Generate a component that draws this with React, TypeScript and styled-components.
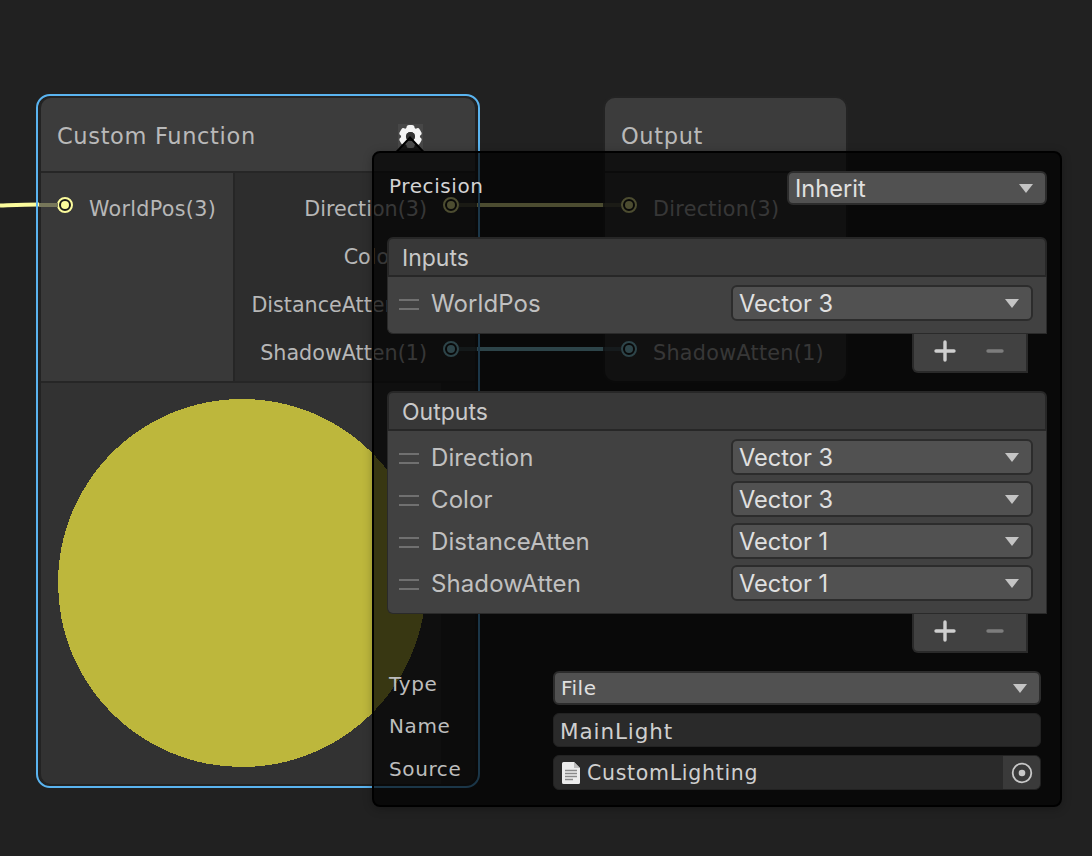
import React from "react";
import styled, { createGlobalStyle } from "styled-components";

const Global = createGlobalStyle`
  html, body { margin: 0; padding: 0; background: #212121; }
`;
const LUCIDA = `"DejaVu Sans", "Noto Sans", sans-serif`;
const INTER = `Inter, "Liberation Sans", sans-serif`;

const Canvas = styled.div`
  position: relative;
  width: 1092px;
  height: 856px;
  overflow: hidden;
  background: #212121;
  font-family: ${LUCIDA};
`;
const Node = styled.div<{ $x: number; $y: number; $w: number }>`
  position: absolute;
  left: ${(p) => p.$x}px;
  top: ${(p) => p.$y}px;
  width: ${(p) => p.$w}px;
  background: #2b2b2b;
  border-radius: 10px;
  overflow: hidden;
  display: flex;
  flex-direction: column;
  box-shadow: 0 0 0 2px #232323;
`;
const Title = styled.div`
  height: 75px;
  flex: none;
  box-sizing: border-box;
  padding: 3px 52px 0 16px;
  display: flex;
  align-items: center;
  justify-content: space-between;
  background: #3c3c3c;
  border-bottom: 2px solid #262626;
  color: #b9b9b9;
  font-size: 22.5px;
  letter-spacing: 0.65px;
`;
const GearBox = styled.div`
  width: 25px;
  height: 25px;
  background: #474747;
  flex: none;
  display: flex;
`;
const Ports = styled.div<{ $last?: boolean }>`
  display: flex;
  height: 208px;
  flex: none;
  overflow: hidden;
  border-bottom: ${(p) => (p.$last ? "0" : "2px solid #262626")};
  box-sizing: content-box;
`;
const InCol = styled.div<{ $full?: boolean }>`
  width: ${(p) => (p.$full ? "100%" : "194px")};
  flex: none;
  background: #393939;
  border-right: ${(p) => (p.$full ? "0" : "2px solid #262626")};
  padding: 24px 0 0 16px;
  box-sizing: border-box;
`;
const OutCol = styled.div`
  flex: 1;
  background: #2d2d2d;
  padding-top: 24px;
  display: flex;
  flex-direction: column;
`;
const PortRow = styled.div<{ $right?: boolean }>`
  height: 48px;
  flex: none;
  display: flex;
  align-items: flex-start;
  justify-content: ${(p) => (p.$right ? "flex-end" : "flex-start")};
  padding-right: ${(p) => (p.$right ? "16px" : "0")};
  gap: 16px;
  color: #b7b7b7;
  font-size: 20.7px;
  line-height: 25px;
`;
const PortLabel = styled.span<{ $wide?: boolean }>`
  white-space: nowrap;
  letter-spacing: ${(p) => (p.$wide ? "0.3px" : "0")};
`;
const Port = styled.span<{ $c: string }>`
  width: 16px;
  height: 16px;
  flex: none;
  box-sizing: border-box;
  border: 2px solid ${(p) => p.$c};
  border-radius: 50%;
  background: #1c1c1c;
  display: flex;
  align-items: center;
  justify-content: center;
  &::after {
    content: "";
    width: 8px;
    height: 8px;
    border-radius: 50%;
    background: ${(p) => p.$c};
  }
`;
const Preview = styled.div`
  width: 400px;
  height: 401px;
  background: #323232;
  display: flex;
  align-items: center;
  justify-content: center;
  padding: 0 0 2px 2px;
  box-sizing: border-box;
`;
const Selection = styled.div`
  position: absolute;
  left: 36px;
  top: 94px;
  width: 444px;
  height: 694px;
  box-sizing: border-box;
  border: 2px solid #5ab4f0;
  border-radius: 14px;
`;
const Wires = styled.svg`
  position: absolute;
  left: 0;
  top: 0;
`;
const Popover = styled.div`
  position: absolute;
  left: 372px;
  top: 151px;
  width: 690px;
  height: 656px;
  box-sizing: border-box;
  padding: 18px 13px 0;
  border: 2px solid #000;
  border-radius: 8px;
  background: rgba(0, 0, 0, 0.7);
  box-shadow: 0 2px 10px rgba(0, 0, 0, 0.25);
  display: flex;
  flex-direction: column;
`;
const Beak = styled.svg`
  position: absolute;
  left: 20px;
  top: -18px;
`;
const FieldRow = styled.div`
  display: flex;
  align-items: center;
  justify-content: space-between;
`;
const FieldLabel = styled.div<{ $bright?: boolean }>`
  margin-left: 2px;
  position: relative;
  top: ${(p) => (p.$bright ? "-2px" : "-4px")};
  font-size: 20px;
  letter-spacing: 0.6px;
  color: ${(p) => (p.$bright ? "#d4d4d4" : "#bdbdbd")};
`;
const Select = styled.div<{ $w: number; $mono?: boolean; $h?: number }>`
  width: ${(p) => p.$w}px;
  height: ${(p) => p.$h ?? 34}px;
  box-sizing: border-box;
  flex: none;
  display: flex;
  align-items: center;
  justify-content: space-between;
  padding: 0 12px 0 6px;
  background: #515151;
  border: 2px solid #2c2c2c;
  border-radius: 6px;
  color: #e0e0e0;
  font-family: ${(p) => (p.$mono ? LUCIDA : INTER)};
  font-size: ${(p) => (p.$mono ? "20px" : "23.6px")};
  letter-spacing: ${(p) => (p.$mono ? "0.5px" : "0")};
`;
const Arrow = styled.span`
  width: 0;
  height: 0;
  border-left: 7.5px solid transparent;
  border-right: 7.5px solid transparent;
  border-top: 9px solid #c4c4c4;
`;
const Section = styled.div<{ $mt: number }>`
  margin-top: ${(p) => p.$mt}px;
  display: flex;
  flex-direction: column;
`;
const SectionHead = styled.div`
  height: 40px;
  box-sizing: border-box;
  padding: 2px 13px 0;
  display: flex;
  align-items: center;
  background: #383838;
  border: 2px solid #272727;
  border-radius: 6px 6px 0 0;
  color: #c9c9c9;
  font-family: ${INTER};
  font-size: 23px;
`;
const List = styled.div`
  box-sizing: border-box;
  padding: 5px 0 9px;
  background: #414141;
  border: 1px solid #2a2a2a;
  border-top: 0;
  border-radius: 0 0 0 6px;
  display: flex;
  flex-direction: column;
`;
const ListRow = styled.div`
  height: 42px;
  display: flex;
  align-items: center;
  padding: 0 13px 0 11px;
  color: #c0c0c0;
  font-family: ${INTER};
  font-size: 24px;
  letter-spacing: 0.1px;
`;
const Handle = styled.span`
  width: 20px;
  height: 7px;
  flex: none;
  margin: 2px 12px 0 0;
  border-top: 2px solid #707070;
  border-bottom: 2px solid #707070;
`;
const RowName = styled.span`
  flex: 1;
`;
const Footer = styled.div`
  align-self: flex-end;
  margin-right: 19px;
  width: 116px;
  height: 39px;
  box-sizing: border-box;
  display: flex;
  align-items: center;
  background: #414141;
  border: 2px solid #2a2a2a;
  border-top: 0;
  border-radius: 0 0 0 6px;
  padding: 0 0 4px 20px;
  gap: 28px;
`;
const Fields = styled.div`
  margin-top: 18px;
  display: flex;
  flex-direction: column;
  gap: 8px;
  padding-right: 6px;
`;
const TextInput = styled.div`
  width: 488px;
  height: 34px;
  box-sizing: border-box;
  display: flex;
  align-items: center;
  padding: 3px 0 0 6px;
  background: #2a2a2a;
  border: 1px solid #222;
  border-radius: 6px;
  color: #cfcfcf;
  font-size: 21.5px;
  letter-spacing: 0.9px;
`;
const ObjectField = styled.div`
  width: 488px;
  height: 35px;
  box-sizing: border-box;
  display: flex;
  align-items: center;
  padding-left: 8px;
  gap: 7px;
  background: #2a2a2a;
  border: 1px solid #222;
  border-radius: 6px;
  overflow: hidden;
  color: #cfcfcf;
  font-size: 20.5px;
  letter-spacing: 0.7px;
`;
const ObjectName = styled.span`
  flex: 1;
`;
const Picker = styled.span`
  width: 37px;
  height: 100%;
  background: #3a3a3a;
  flex: none;
  display: flex;
  align-items: center;
  justify-content: center;
`;

const Gear = () => (
  <svg width="25" height="25" viewBox="0 0 25 25">
    {[0, 60, 120, 180, 240, 300].map((a) => (
      <rect key={a} x="8.500" y="1" width="8" height="6" rx="2.500" fill="#f4f4f4" transform={`rotate(${a} 12.5 12.5)`} />
    ))}
    <circle cx="12.500" cy="12.500" r="7" fill="none" stroke="#f4f4f4" strokeWidth="5" />
    <circle cx="12.500" cy="12.500" r="4.500" fill="#333" />
  </svg>
);
const Plus = () => (
  <svg width="22" height="22" viewBox="0 0 22 22">
    <path d="M11 2v18M2 11h18" stroke="#cfcfcf" strokeWidth="3.400" strokeLinecap="round" />
  </svg>
);
const Minus = () => (
  <svg width="22" height="22" viewBox="0 0 22 22">
    <path d="M4 11h14" stroke="#7d7d7d" strokeWidth="3.400" strokeLinecap="round" />
  </svg>
);
const Doc = () => (
  <svg width="18" height="22" viewBox="0 0 18 22">
    <path d="M1.500 0h10.500l6 6v14.500a1.500 1.500 0 0 1-1.500 1.500h-15A1.500 1.500 0 0 1 0 20.500V1.500A1.500 1.500 0 0 1 1.500 0z" fill="#ececec" />
    <path d="M12 0v6h6z" fill="#bdbdbd" />
    <path d="M3 8.500h12M3 11.500h12M3 14.500h12M3 17.500h8" stroke="#8a8a8a" strokeWidth="1.300" />
  </svg>
);
const Target = () => (
  <svg width="22" height="22" viewBox="0 0 22 22">
    <circle cx="11" cy="11" r="9.300" fill="none" stroke="#c8c8c8" strokeWidth="1.800" />
    <circle cx="11" cy="11" r="3.300" fill="#c8c8c8" />
  </svg>
);
const PreviewDisc = () => (
  <svg width="368" height="368" viewBox="0 0 184 184" shapeRendering="crispEdges">
    <circle cx="92" cy="92" r="92" fill="#bdb73c" />
  </svg>
);

const Row = ({ name, type }: { name: string; type: string }) => (
  <ListRow>
    <Handle />
    <RowName>{name}</RowName>
    <Select $w={302} $h={36}>
      {type}
      <Arrow />
    </Select>
  </ListRow>
);
const ListFooter = () => (
  <Footer>
    <Plus />
    <Minus />
  </Footer>
);

const YELLOW = "#fbfb9c";
const OLIVE = "#fdfda0";
const TEAL = "#98e4f4";

export default function App() {
  return (
    <Canvas>
      <Global />
      <Node $x={41} $y={98} $w={434}>
        <Title>
          Custom Function
          <GearBox>
            <Gear />
          </GearBox>
        </Title>
        <Ports>
          <InCol>
            <PortRow>
              <Port $c={YELLOW} />
              <PortLabel $wide>WorldPos(3)</PortLabel>
            </PortRow>
          </InCol>
          <OutCol>
            <PortRow $right>
              <PortLabel>Direction(3)</PortLabel>
              <Port $c={OLIVE} />
            </PortRow>
            <PortRow $right>
              <PortLabel>Color(3)</PortLabel>
              <Port $c={OLIVE} />
            </PortRow>
            <PortRow $right>
              <PortLabel>DistanceAtten(1)</PortLabel>
              <Port $c={TEAL} />
            </PortRow>
            <PortRow $right>
              <PortLabel>ShadowAtten(1)</PortLabel>
              <Port $c={TEAL} />
            </PortRow>
          </OutCol>
        </Ports>
        <Preview>
          <PreviewDisc />
        </Preview>
      </Node>
      <Node $x={605} $y={98} $w={241}>
        <Title>Output</Title>
        <Ports $last>
          <InCol $full>
            <PortRow>
              <Port $c={OLIVE} />
              <PortLabel $wide>Direction(3)</PortLabel>
            </PortRow>
            <PortRow />
            <PortRow />
            <PortRow>
              <Port $c={TEAL} />
              <PortLabel $wide>ShadowAtten(1)</PortLabel>
            </PortRow>
          </InCol>
        </Ports>
      </Node>
      <Wires width="1092" height="856" viewBox="0 0 1092 856">
        <path d="M0 205.500C14 205 24 204.500 39 204.500" stroke="#fbfb9c" strokeWidth="4" fill="none" />
        <path d="M39 205h19" stroke="#77775a" strokeWidth="4" />
        <path d="M459 205h18M603 205h18" stroke="#8a8a60" strokeWidth="4" opacity="0.45" />
        <path d="M477 205h126" stroke={OLIVE} strokeWidth="4" />
        <path d="M459 349h18M603 349h18" stroke="#84c8dc" strokeWidth="4" opacity="0.25" />
        <path d="M477 349h126" stroke={TEAL} strokeWidth="4" />
      </Wires>
      <Selection />
      <Popover>
        <Beak width="32" height="18" viewBox="0 0 32 18">
          <path d="M2 17.500L16 2.500L30 17.500" fill="rgba(0,0,0,0.7)" stroke="#000" strokeWidth="2" />
        </Beak>
        <FieldRow>
          <FieldLabel $bright>Precision</FieldLabel>
          <Select $w={260}>
            Inherit
            <Arrow />
          </Select>
        </FieldRow>
        <Section $mt={32}>
          <SectionHead>Inputs</SectionHead>
          <List>
            <Row name="WorldPos" type="Vector 3" />
          </List>
          <ListFooter />
        </Section>
        <Section $mt={18}>
          <SectionHead>Outputs</SectionHead>
          <List>
            <Row name="Direction" type="Vector 3" />
            <Row name="Color" type="Vector 3" />
            <Row name="DistanceAtten" type="Vector 1" />
            <Row name="ShadowAtten" type="Vector 1" />
          </List>
          <ListFooter />
        </Section>
        <Fields>
          <FieldRow>
            <FieldLabel>Type</FieldLabel>
            <Select $w={488} $mono>
              File
              <Arrow />
            </Select>
          </FieldRow>
          <FieldRow>
            <FieldLabel>Name</FieldLabel>
            <TextInput>MainLight</TextInput>
          </FieldRow>
          <FieldRow>
            <FieldLabel>Source</FieldLabel>
            <ObjectField>
              <Doc />
              <ObjectName>CustomLighting</ObjectName>
              <Picker>
                <Target />
              </Picker>
            </ObjectField>
          </FieldRow>
        </Fields>
      </Popover>
    </Canvas>
  );
}
